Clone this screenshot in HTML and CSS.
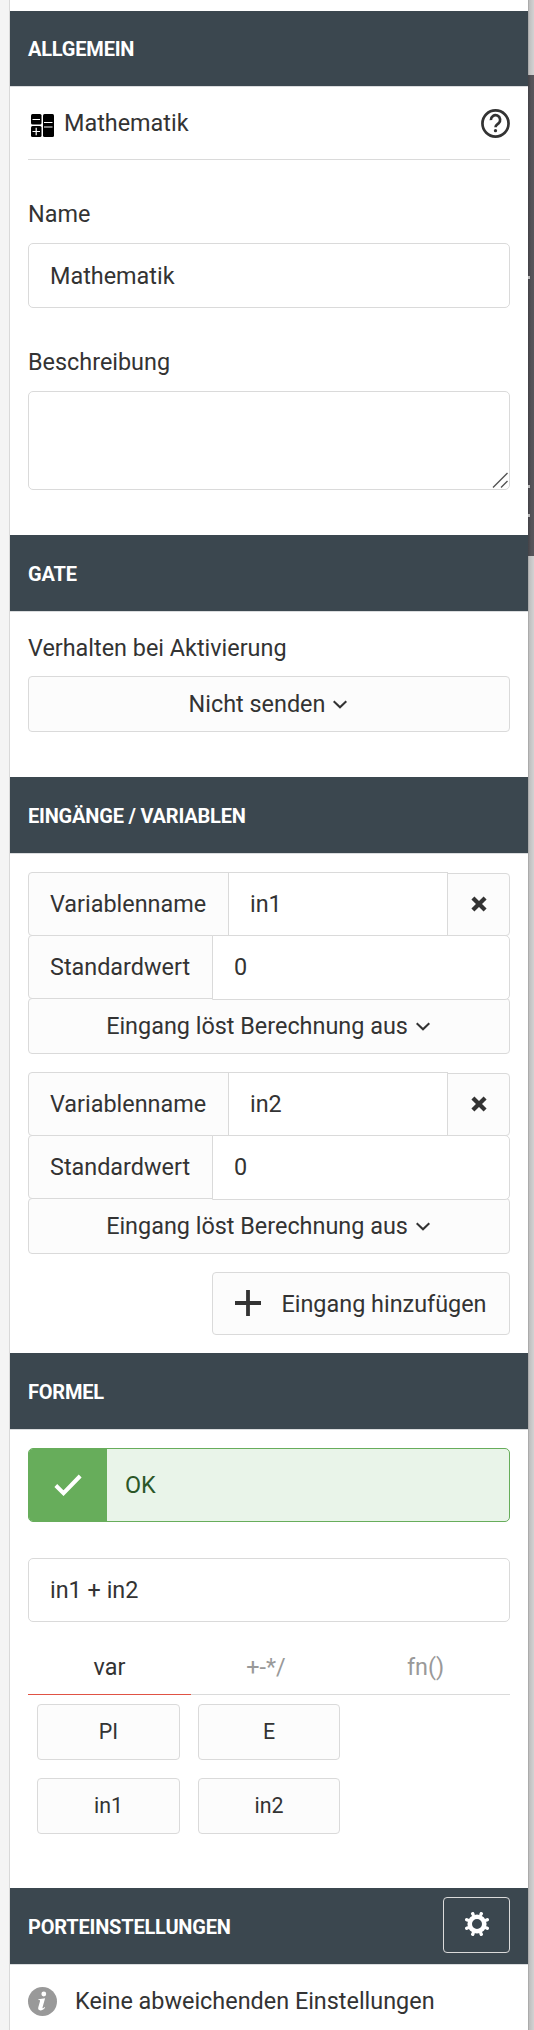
FILE: index.html
```html
<!DOCTYPE html>
<html lang="de">
<head>
    <meta charset="UTF-8">
    <meta name="viewport" content="width=device-width, initial-scale=1.0">
    <title>Mathematik</title>
    <link rel="stylesheet" href="styles.css">
</head>
<body>
    <div class="panel">
        <h2 class="section-title first">Allgemein</h2>
        <div class="section general">
            <div class="block-head">
                <svg class="calc-icon" width="23" height="23" viewBox="0 0 23 23">
                    <rect width="10.5" height="10.5" rx="1.5"/>
                    <rect y="12" width="10.5" height="11" rx="1.5"/>
                    <rect x="12" width="11" height="23" rx="1.5"/>
                    <path d="M1.5 5.5h7.5M1.5 17.5h7.5M5.2 13.8v7.5M13 8.5h8.5M13 13h8.5" stroke="#fff" stroke-width="1.2"/>
                </svg>
                <span>Mathematik</span>
                <svg class="help-icon" width="29" height="29" viewBox="0 0 30 30" fill="none" stroke="#333" stroke-width="2.8">
                    <circle cx="15" cy="15" r="13.5"/>
                    <path d="M10.2 11.5a4.8 4.8 0 1 1 7.9 3.4c-1.8 1.4-3.1 1.8-3.1 4.1"/>
                    <circle cx="15" cy="22.4" r="1.7" fill="#333" stroke="none"/>
                </svg>
            </div>
            <label class="label" for="name">Name</label>
            <input class="input" id="name" type="text" value="Mathematik">
            <label class="label" for="desc">Beschreibung</label>
            <div class="textarea-wrap">
                <textarea class="input textarea" id="desc"></textarea>
                <svg class="grip" width="16" height="16" viewBox="0 0 16 16" stroke="#555" stroke-width="1.4">
                    <path d="M1 15.5L15.5 1M9 15.5l6.5-6.5"/>
                </svg>
            </div>
        </div>

        <h2 class="section-title">Gate</h2>
        <div class="section gate">
            <span class="label">Verhalten bei Aktivierung</span>
            <button class="button dropdown">
                <span>Nicht senden</span>
                <svg class="chevron" width="14" height="9" viewBox="0 0 14 9"><path d="M.7 1.2L7 7.2l6.300-6"/></svg>
            </button>
        </div>

        <h2 class="section-title">Eingänge / Variablen</h2>
        <div class="section inputs">
            <div class="variable">
                <div class="row">
                    <span class="addon addon-name">Variablenname</span>
                    <input class="input" type="text" value="in1">
                    <button class="button remove">
                        <svg width="16" height="16" viewBox="0 0 15 15"><path d="M1.8 1.8l11.4 11.4M13.2 1.8L1.8 13.2"/></svg>
                    </button>
                </div>
                <div class="row">
                    <span class="addon addon-default">Standardwert</span>
                    <input class="input last" type="text" value="0">
                </div>
                <button class="button dropdown">
                    <span>Eingang löst Berechnung aus</span>
                    <svg class="chevron" width="14" height="9" viewBox="0 0 14 9"><path d="M.7 1.2L7 7.2l6.300-6"/></svg>
                </button>
            </div>
            <div class="variable">
                <div class="row">
                    <span class="addon addon-name">Variablenname</span>
                    <input class="input" type="text" value="in2">
                    <button class="button remove">
                        <svg width="16" height="16" viewBox="0 0 15 15"><path d="M1.8 1.8l11.4 11.4M13.2 1.8L1.8 13.2"/></svg>
                    </button>
                </div>
                <div class="row">
                    <span class="addon addon-default">Standardwert</span>
                    <input class="input last" type="text" value="0">
                </div>
                <button class="button dropdown">
                    <span>Eingang löst Berechnung aus</span>
                    <svg class="chevron" width="14" height="9" viewBox="0 0 14 9"><path d="M.7 1.2L7 7.2l6.300-6"/></svg>
                </button>
            </div>
            <button class="button add">
                <svg width="26" height="26" viewBox="0 0 26 26"><path d="M13 0v26M0 13h26" stroke="#333" stroke-width="3.8"/></svg>
                <span>Eingang hinzufügen</span>
            </button>
        </div>

        <h2 class="section-title">Formel</h2>
        <div class="section formula">
            <div class="alert">
                <div class="alert-icon">
                    <svg width="28" height="22" viewBox="0 0 28 22"><path d="M1.8 11.5l7.7 7.7L26.2 2" fill="none" stroke="#fff" stroke-width="4"/></svg>
                </div>
                <span class="alert-text">OK</span>
            </div>
            <input class="input" type="text" value="in1 + in2">
            <div class="tabs">
                <a class="tab active">var</a>
                <a class="tab">+-*/</a>
                <a class="tab">fn()</a>
            </div>
            <div class="keys">
                <button class="button">PI</button>
                <button class="button">E</button>
                <button class="button">in1</button>
                <button class="button">in2</button>
            </div>
        </div>

        <h2 class="section-title">Porteinstellungen
            <button class="gear">
                <svg width="24" height="24" viewBox="-12 -12 24 24" fill="none" stroke="#fff">
                    <circle r="7.3" stroke-width="4.6"/>
                    <path d="M-4 -9.6L-4.3 -10.3M4 -9.6L4.3 -10.3M-4 9.6L-4.3 10.3M4 9.6L4.3 10.3M-9.6 -4L-10.3 -4.3M-9.6 4L-10.3 4.3M9.6 -4L10.3 -4.3M9.6 4L10.3 4.3" stroke-width="3.4" stroke-linecap="round"/>
                </svg>
            </button>
        </h2>
        <div class="section ports">
            <svg width="29" height="29" viewBox="0 0 29 29">
                <circle cx="14.5" cy="14.5" r="14.5" fill="#999"/>
                <circle cx="15.8" cy="7" r="2.4" fill="#fff"/>
                <path d="M10.5 12.2l6.6-1-2.6 9.3c-.2.9.4.9 1 .4l1-.8.6.6c-1.6 1.9-3 2.7-4.6 2.7-2 0-2.7-1.3-2.2-3.1l1.7-6c.2-.8-.1-1.1-1.7-1.2z" fill="#fff"/>
            </svg>
            <span>Keine abweichenden Einstellungen</span>
        </div>
    </div>
    <div class="canvas-edge">
        <div class="canvas-node"><i></i><i></i><i></i></div>
    </div>
</body>
</html>
```
FILE: styles.css
```css
* {
    box-sizing: border-box;
}

body {
    margin: 0;
    display: flex;
    height: 2030px;
    padding-left: 9px;
    background: #f4f4f4;
    color: #333;
    font-family: Roboto, sans-serif;
    font-size: 23.4px;
    line-height: 32px;
    overflow: hidden;
}

.panel {
    width: 519px;
    padding-top: 11px;
    border-left: 1px solid #d9d9d9;
    background: #fff;
}

svg {
    display: block;
    flex: none;
}

.section-title {
    display: flex;
    align-items: center;
    justify-content: space-between;
    height: 77px;
    margin: 0;
    padding: 1px 18px 0;
    border-bottom: 1px solid #dadcde;
    background: #3b474f;
    color: #fff;
    font-size: 20px;
    font-weight: 700;
    letter-spacing: -0.2px;
    text-transform: uppercase;
}

.section-title.first {
    height: 76px;
}

.section {
    padding: 0 18px;
}

/* form controls */
.label {
    display: block;
}

.input {
    display: block;
    width: 100%;
    height: 65px;
    margin: 0;
    padding: 0 21px;
    border: 1px solid #dadada;
    border-radius: 5px;
    background: #fff;
    color: #333;
    font: inherit;
    outline: none;
}

.button {
    display: flex;
    align-items: center;
    justify-content: center;
    height: 56px;
    margin: 0;
    padding: 0;
    border: 1px solid #dadada;
    border-radius: 4px;
    background: #fcfcfc;
    color: #333;
    font: inherit;
    cursor: pointer;
}

.dropdown {
    width: 100%;
    padding-right: 2px;
    gap: 8px;
}

.chevron {
    fill: none;
    stroke: #333;
    stroke-width: 2.1;
}

/* general */
.general {
    padding-bottom: 45px;
}

.block-head {
    display: flex;
    align-items: center;
    height: 73px;
    border-bottom: 1px solid #dadada;
}

.calc-icon {
    margin: 5px 10px 0 3px;
}

.help-icon {
    margin-left: auto;
}

.general .label {
    margin: 38px 0 13px;
}

.textarea-wrap {
    position: relative;
}

.textarea {
    height: 99px;
    resize: none;
}

.grip {
    position: absolute;
    right: 2px;
    bottom: 2px;
}

/* gate */
.gate {
    padding-top: 20px;
    padding-bottom: 45px;
}

.gate .label {
    margin-bottom: 12px;
}

/* inputs */
.inputs {
    display: flex;
    flex-direction: column;
    gap: 18px;
    padding-top: 18px;
    padding-bottom: 18px;
}

.row {
    display: flex;
    align-items: flex-start;
    height: 63px;
}

.addon {
    flex: none;
    height: 64px;
    padding-left: 21px;
    border: 1px solid #dadada;
    border-radius: 4px 0 0 4px;
    background: #fcfcfc;
    line-height: 62px;
}

.addon-name {
    width: 201px;
}

.addon-default {
    width: 185px;
}

.row .input {
    flex: 1;
    min-width: 0;
    height: 64px;
    margin-left: -1px;
    border-radius: 0;
}

.row .input.last {
    position: relative;
    height: 65px;
    padding-bottom: 1px;
    border-radius: 0 5px 5px 0;
}

.remove {
    width: 63px;
    height: 63px;
    margin: 1px 0 0 -1px;
    padding-bottom: 1px;
    border-radius: 0 4px 4px 0;
}

.remove path {
    stroke: #333;
    stroke-width: 4;
}

.add {
    align-self: flex-end;
    width: 298px;
    height: 63px;
    gap: 20px;
}

.add svg {
    margin-top: -2px;
}

/* formula */
.formula {
    padding-top: 18px;
    padding-bottom: 54px;
}

.alert {
    display: flex;
    height: 74px;
    margin-bottom: 36px;
    border: 1px solid #67ad5b;
    border-radius: 5px;
    background: #e9f4e9;
    color: #2b5627;
    overflow: hidden;
}

.alert-icon {
    display: flex;
    align-items: center;
    justify-content: center;
    width: 78px;
    background: #67ad5b;
}

.alert-text {
    padding-left: 18px;
    line-height: 72px;
}

.formula .input {
    height: 64px;
}

.tabs {
    display: grid;
    grid-template-columns: 163px 150px 1fr;
    margin-top: 29px;
}

.tab {
    height: 44px;
    border-bottom: 1px solid #dadada;
    color: #999;
    text-align: center;
}

.tab.active {
    border-bottom-color: #e05244;
    color: #333;
}

.keys {
    display: grid;
    grid-template-columns: 143px 142px;
    gap: 18px;
    padding: 9px 0 0 9px;
    font-size: 21.4px;
}

/* ports */
.gear {
    display: flex;
    align-items: center;
    justify-content: center;
    width: 67px;
    height: 56px;
    margin-top: -3px;
    padding: 0 0 3px;
    border: 1px solid #dadada;
    border-radius: 4px;
    background: none;
}

.ports {
    display: flex;
    align-items: center;
    gap: 18px;
    padding-top: 20px;
}

/* strip of the editor canvas beside the panel */
.canvas-edge {
    flex: 1;
    padding-top: 75px;
    background: linear-gradient(to right, #999 0, #bdbdbd 1px, #c6c6c6 3px, #d2d2d2 6px);
}

.canvas-node {
    height: 481px;
    padding-top: 201px;
    background: linear-gradient(to right, #434247, #535257 3px, #57565b);
}

.canvas-node i {
    display: block;
    width: 2px;
    height: 3px;
    margin-bottom: 206px;
    background: #bbb;
}

.canvas-node i + i {
    margin-bottom: 26px;
}
```
